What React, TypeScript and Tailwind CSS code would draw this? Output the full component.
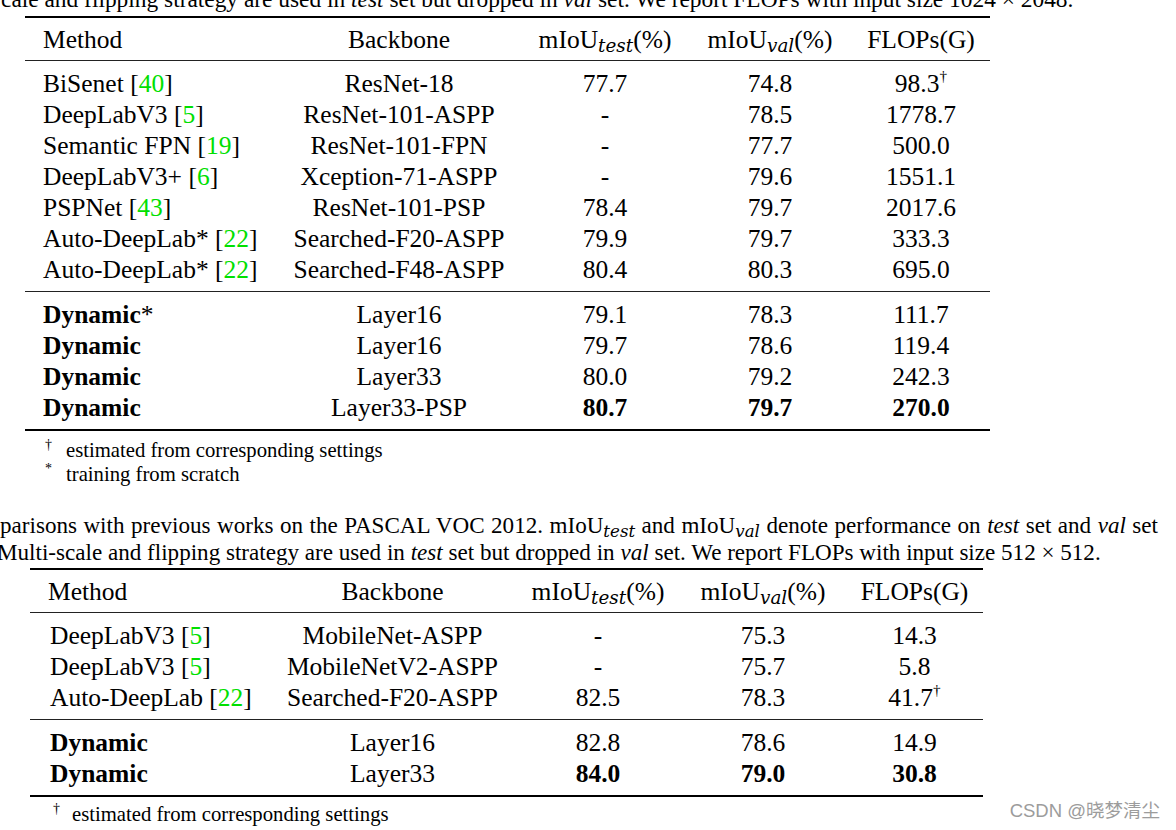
import React from "react";

type Cell = React.ReactNode;

const Cite = ({ n }: { n: string }) => (
  <>
    [<span className="text-[#00e000]">{n}</span>]
  </>
);

const Sub = ({ children }: { children: React.ReactNode }) => (
  <sub className="italic text-[0.72em] font-['DejaVu_Serif','Liberation_Serif',serif]">{children}</sub>
);

const Dag = () => <sup className="text-[0.6em] -top-[0.7em]">†</sup>;

function Header({ cols }: { cols: string }) {
  return (
    <div className={`grid ${cols} h-[42px] items-center`}>
      <div className="pl-[18px]">Method</div>
      <div className="text-center">Backbone</div>
      <div className="text-center">
        mIoU<Sub>test</Sub>(%)
      </div>
      <div className="text-center">
        mIoU<Sub>val</Sub>(%)
      </div>
      <div className="text-center">FLOPs(G)</div>
    </div>
  );
}

function Row({ cols, cells, pl }: { cols: string; cells: Cell[]; pl: string }) {
  return (
    <div className={`grid ${cols} h-[31px] items-center`}>
      <div className={pl}>{cells[0]}</div>
      {cells.slice(1).map((c, i) => (
        <div key={i} className="text-center">
          {c}
        </div>
      ))}
    </div>
  );
}

const cols1 = "grid-cols-[251px_246px_166px_164px_138px]";
const cols2 = "grid-cols-[239px_247px_164px_166px_137px]";

const t1a: Cell[][] = [
  [<>BiSenet <Cite n="40" /></>, "ResNet-18", "77.7", "74.8", <>98.3<Dag /></>],
  [<>DeepLabV3 <Cite n="5" /></>, "ResNet-101-ASPP", "-", "78.5", "1778.7"],
  [<>Semantic FPN <Cite n="19" /></>, "ResNet-101-FPN", "-", "77.7", "500.0"],
  [<>DeepLabV3+ <Cite n="6" /></>, "Xception-71-ASPP", "-", "79.6", "1551.1"],
  [<>PSPNet <Cite n="43" /></>, "ResNet-101-PSP", "78.4", "79.7", "2017.6"],
  [<>Auto-DeepLab* <Cite n="22" /></>, "Searched-F20-ASPP", "79.9", "79.7", "333.3"],
  [<>Auto-DeepLab* <Cite n="22" /></>, "Searched-F48-ASPP", "80.4", "80.3", "695.0"],
];

const t1b: Cell[][] = [
  [<><b>Dynamic</b>*</>, "Layer16", "79.1", "78.3", "111.7"],
  [<b>Dynamic</b>, "Layer16", "79.7", "78.6", "119.4"],
  [<b>Dynamic</b>, "Layer33", "80.0", "79.2", "242.3"],
  [<b>Dynamic</b>, "Layer33-PSP", <b>80.7</b>, <b>79.7</b>, <b>270.0</b>],
];

const t2a: Cell[][] = [
  [<>DeepLabV3 <Cite n="5" /></>, "MobileNet-ASPP", "-", "75.3", "14.3"],
  [<>DeepLabV3 <Cite n="5" /></>, "MobileNetV2-ASPP", "-", "75.7", "5.8"],
  [<>Auto-DeepLab <Cite n="22" /></>, "Searched-F20-ASPP", "82.5", "78.3", <>41.7<Dag /></>],
];

const t2b: Cell[][] = [
  [<b>Dynamic</b>, "Layer16", "82.8", "78.6", "14.9"],
  [<b>Dynamic</b>, "Layer33", <b>84.0</b>, <b>79.0</b>, <b>30.8</b>],
];

export default function App() {
  return (
    <div className="relative w-[1176px] h-[830px] overflow-hidden bg-white text-black font-['Liberation_Serif','Times_New_Roman',serif]">
      {/* caption tail of table 1 */}
      <div className="-mt-[14px] h-[27px] leading-[27px] text-[23.4px] whitespace-nowrap pl-[1px]">
        cale and flipping strategy are used in <i>test</i> set but dropped in <i>val</i> set. We report FLOPs with input size 1024 × 2048.
      </div>

      {/* table 1 */}
      <div className="mt-[3px] ml-[25px] w-[965px] text-[25.5px] leading-[31px]">
        <div className="h-[2px] bg-black" />
        <Header cols={cols1} />
        <div className="h-px bg-[#222]" />
        <div className="pt-[7px] pb-[6px]">
          {t1a.map((r, i) => (
            <Row key={i} cols={cols1} cells={r} pl="pl-[18px]" />
          ))}
        </div>
        <div className="h-px bg-[#222]" />
        <div className="pt-[7px] pb-[6px]">
          {t1b.map((r, i) => (
            <Row key={i} cols={cols1} cells={r} pl="pl-[18px]" />
          ))}
        </div>
        <div className="h-[2px] bg-black" />
      </div>

      <div className="mt-[7px] ml-[45px] text-[20.7px] leading-[24px]">
        <div className="flex">
          <span className="w-[21px] text-[14px] leading-[14px]">†</span>
          <span>estimated from corresponding settings</span>
        </div>
        <div className="flex">
          <span className="w-[21px] text-[14px] leading-[14px]">*</span>
          <span>training from scratch</span>
        </div>
      </div>

      {/* caption of table 2 */}
      <div className="mt-[26px] text-[23.1px] leading-[27px] whitespace-nowrap">
        <div className="w-[1158px] [text-align-last:justify]">
          parisons with previous works on the PASCAL VOC 2012. mIoU<Sub>test</Sub> and mIoU<Sub>val</Sub> denote performance on <i>test</i> set and <i>val</i> set
        </div>
        <div className="-ml-[3px]">
          Multi-scale and flipping strategy are used in <i>test</i> set but dropped in <i>val</i> set. We report FLOPs with input size 512 × 512.
        </div>
      </div>

      {/* table 2 */}
      <div className="mt-[2px] ml-[30px] w-[953px] text-[25.5px] leading-[31px]">
        <div className="h-[2px] bg-black" />
        <Header cols={cols2} />
        <div className="h-px bg-[#222]" />
        <div className="pt-[7px] pb-[6px]">
          {t2a.map((r, i) => (
            <Row key={i} cols={cols2} cells={r} pl="pl-[20px]" />
          ))}
        </div>
        <div className="h-px bg-[#222]" />
        <div className="pt-[7px] pb-[6px]">
          {t2b.map((r, i) => (
            <Row key={i} cols={cols2} cells={r} pl="pl-[20px]" />
          ))}
        </div>
        <div className="h-[2px] bg-black" />
      </div>

      <div className="mt-[5px] ml-[53px] text-[20.7px] leading-[24px] flex">
        <span className="w-[19px] text-[14px] leading-[14px]">†</span>
        <span>estimated from corresponding settings</span>
      </div>

      <div className="absolute right-[16px] bottom-[5px] text-[18.5px] text-[#9c9c9c] font-['Liberation_Sans','Noto_Sans_CJK_SC',sans-serif]">
        CSDN @晓梦清尘
      </div>
    </div>
  );
}
